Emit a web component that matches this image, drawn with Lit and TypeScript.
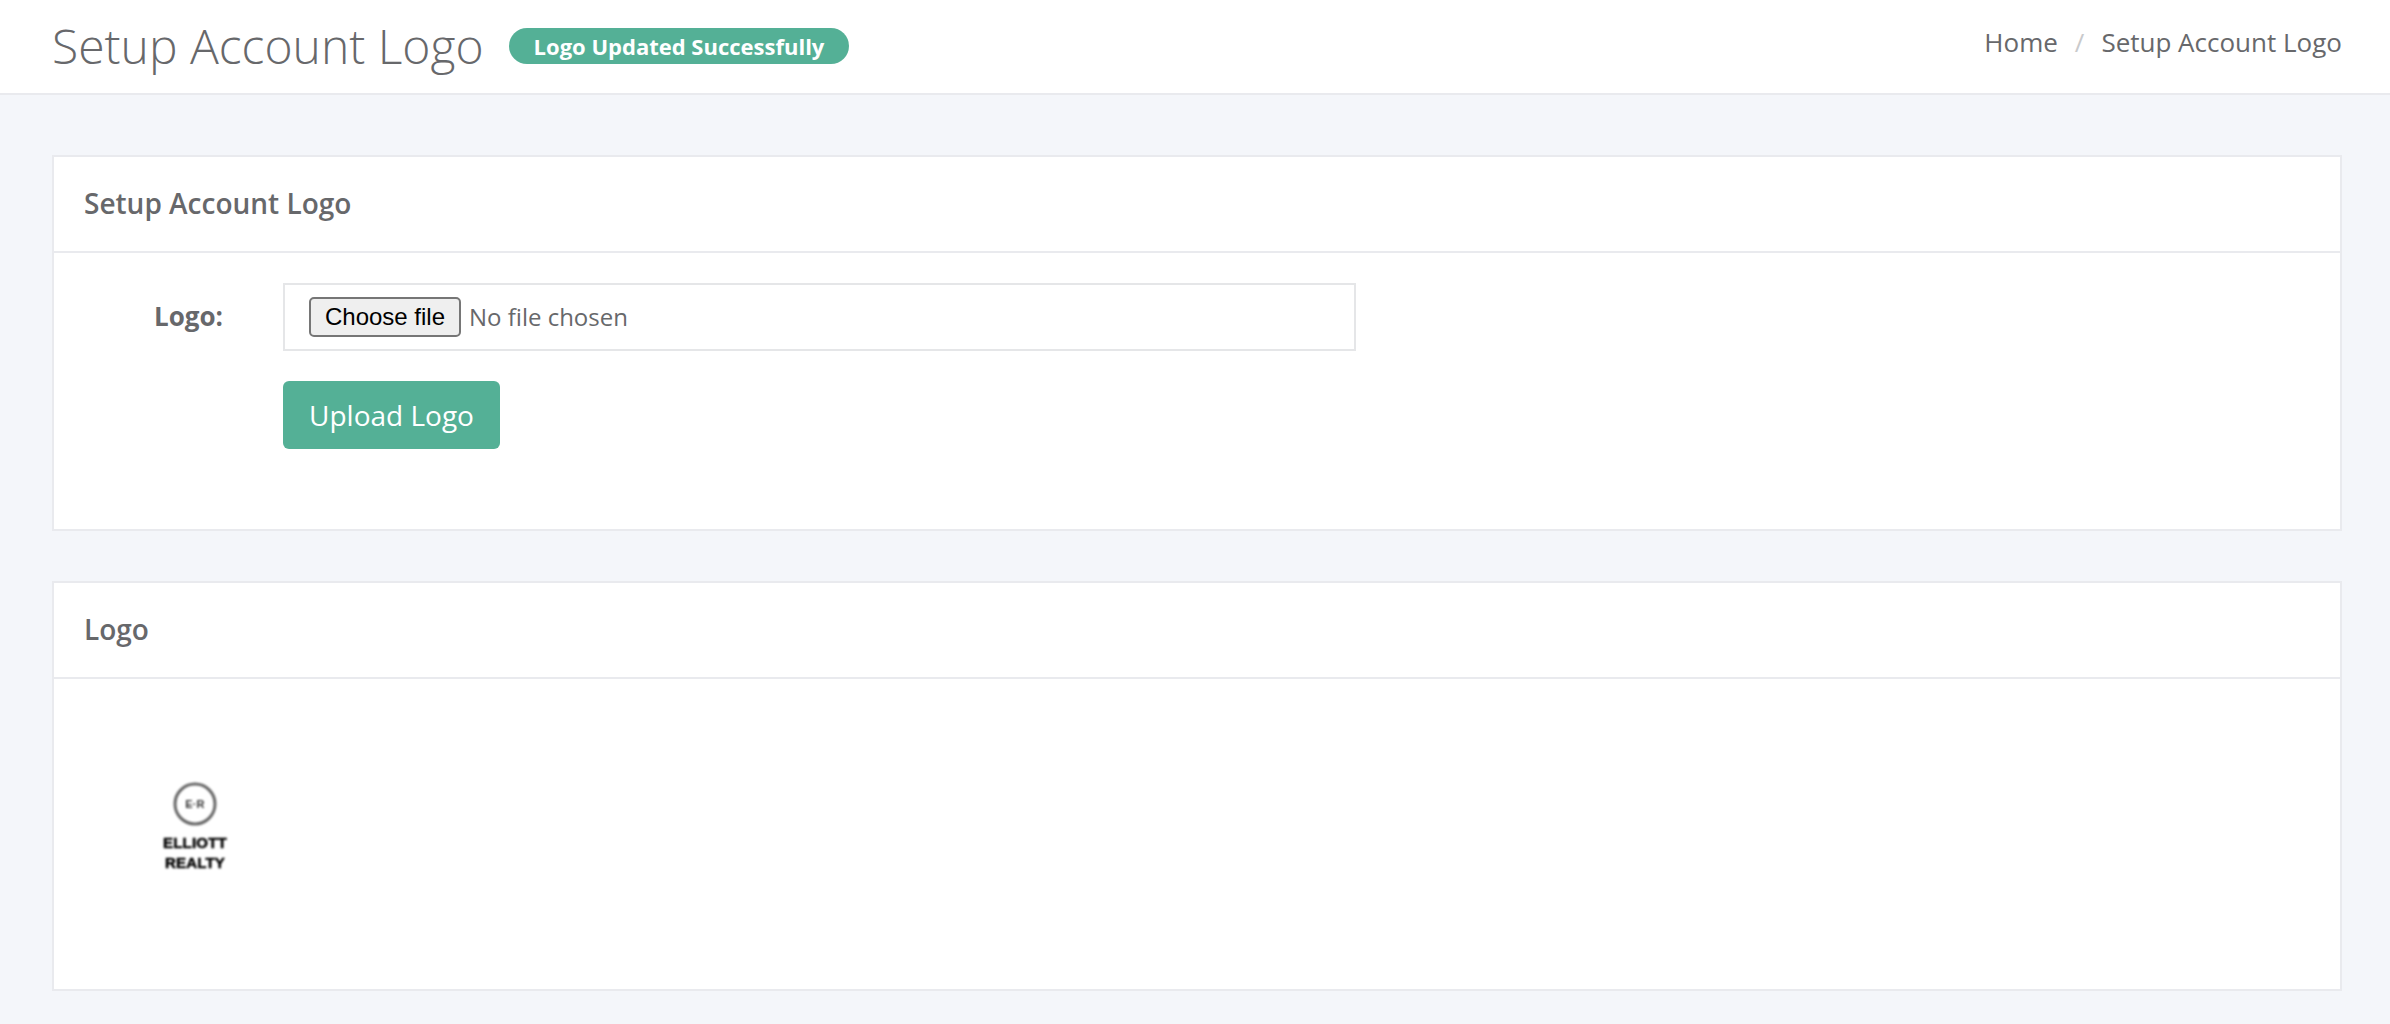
import { LitElement, html, css } from "lit";
import { customElement } from "lit/decorators.js";

@customElement("app-root")
export class AppRoot extends LitElement {
  static styles = css`
    :host { display: block; min-height: 1024px; background: #f4f6fa; font-family: "Open Sans", "Liberation Sans", sans-serif; color: #67686b; }
    * { box-sizing: border-box; }
    .topbar { height: 95px; background: #fff; border-bottom: 2px solid #e9eaee; padding: 0 48px 0 52px; display: flex; align-items: flex-start; justify-content: space-between; }
    .title-wrap { display: flex; align-items: center; height: 91px; gap: 25px; }
    h1 { margin: 0; font-size: 48px; font-weight: 300; line-height: 60px; }
    .badge { background: #54b096; color: #fff; font-size: 22px; font-weight: 700; line-height: 36px; height: 36px; padding: 0 25px; border-radius: 18px; }
    .crumbs { display: flex; align-items: center; height: 83px; font-size: 26px; gap: 17px; }
    .crumbs .sep { color: #c9cacc; }
    main { padding: 60px 48px 0 52px; display: flex; flex-direction: column; gap: 50px; }
    .card { background: #fff; border: 2px solid #e9eaee; }
    .card-head { height: 96px; border-bottom: 2px solid #e9eaee; padding: 0 30px 3px; display: flex; align-items: center; font-size: 28px; font-weight: 600; }
    .form { height: 276px; padding: 30px 0 0 0; display: grid; grid-template-columns: 229px 1073px; row-gap: 30px; align-content: start; }
    .label { font-size: 26px; font-weight: 700; text-align: right; padding: 0 60px 2px 0; align-self: center; }
    .file { height: 68px; border: 2px solid #e5e6e8; background: #fff; padding: 0 24px; display: flex; align-items: center; gap: 8px; font-size: 24px; }
    .none { padding-bottom: 2px; }
    .choose { font: 400 24px "Liberation Sans", Arial, sans-serif; color: #000; background: #efefef; border: 2px solid #767676; border-radius: 5px; height: 40px; width: 152px; padding: 0; }
    .btn { grid-column: 2; justify-self: start; width: 217px; height: 68px; border: 0; border-radius: 6px; background: #54b096; color: #fff; font: 400 28px "Open Sans", sans-serif; padding: 0; }
    .logo-body { height: 310px; padding: 103px 0 0 106px; }
    .logo { display: flex; flex-direction: column; align-items: center; width: 70px; filter: blur(1px); color: #000; font-family: "Liberation Sans", sans-serif; font-weight: 700; font-size: 15px; line-height: 20px; letter-spacing: 0.2px; -webkit-text-stroke: 0.5px #000; }
    .logo svg { display: block; margin-bottom: 7px; }
    .mark { font-size: 11px; -webkit-text-stroke: 0.2px #333; }
  `;

  render() {
    return html`
      <div class="topbar">
        <div class="title-wrap">
          <h1>Setup Account Logo</h1>
          <span class="badge">Logo Updated Successfully</span>
        </div>
        <div class="crumbs"><span>Home</span><span class="sep">/</span><span>Setup Account Logo</span></div>
      </div>
      <main>
        <section class="card">
          <div class="card-head">Setup Account Logo</div>
          <div class="form">
            <div class="label">Logo:</div>
            <div class="file"><button class="choose">Choose file</button><span class="none">No file chosen</span></div>
            <button class="btn">Upload Logo</button>
          </div>
        </section>
        <section class="card">
          <div class="card-head">Logo</div>
          <div class="logo-body">
            <div class="logo">
              <svg width="44" height="44" viewBox="0 0 44 44">
                <circle cx="22" cy="22" r="20" fill="none" stroke="#666" stroke-width="3"></circle>
                <text class="mark" x="22" y="26" text-anchor="middle" fill="#333">E·R</text>
              </svg>
              <span>ELLIOTT</span>
              <span>REALTY</span>
            </div>
          </div>
        </section>
      </main>
    `;
  }
}
